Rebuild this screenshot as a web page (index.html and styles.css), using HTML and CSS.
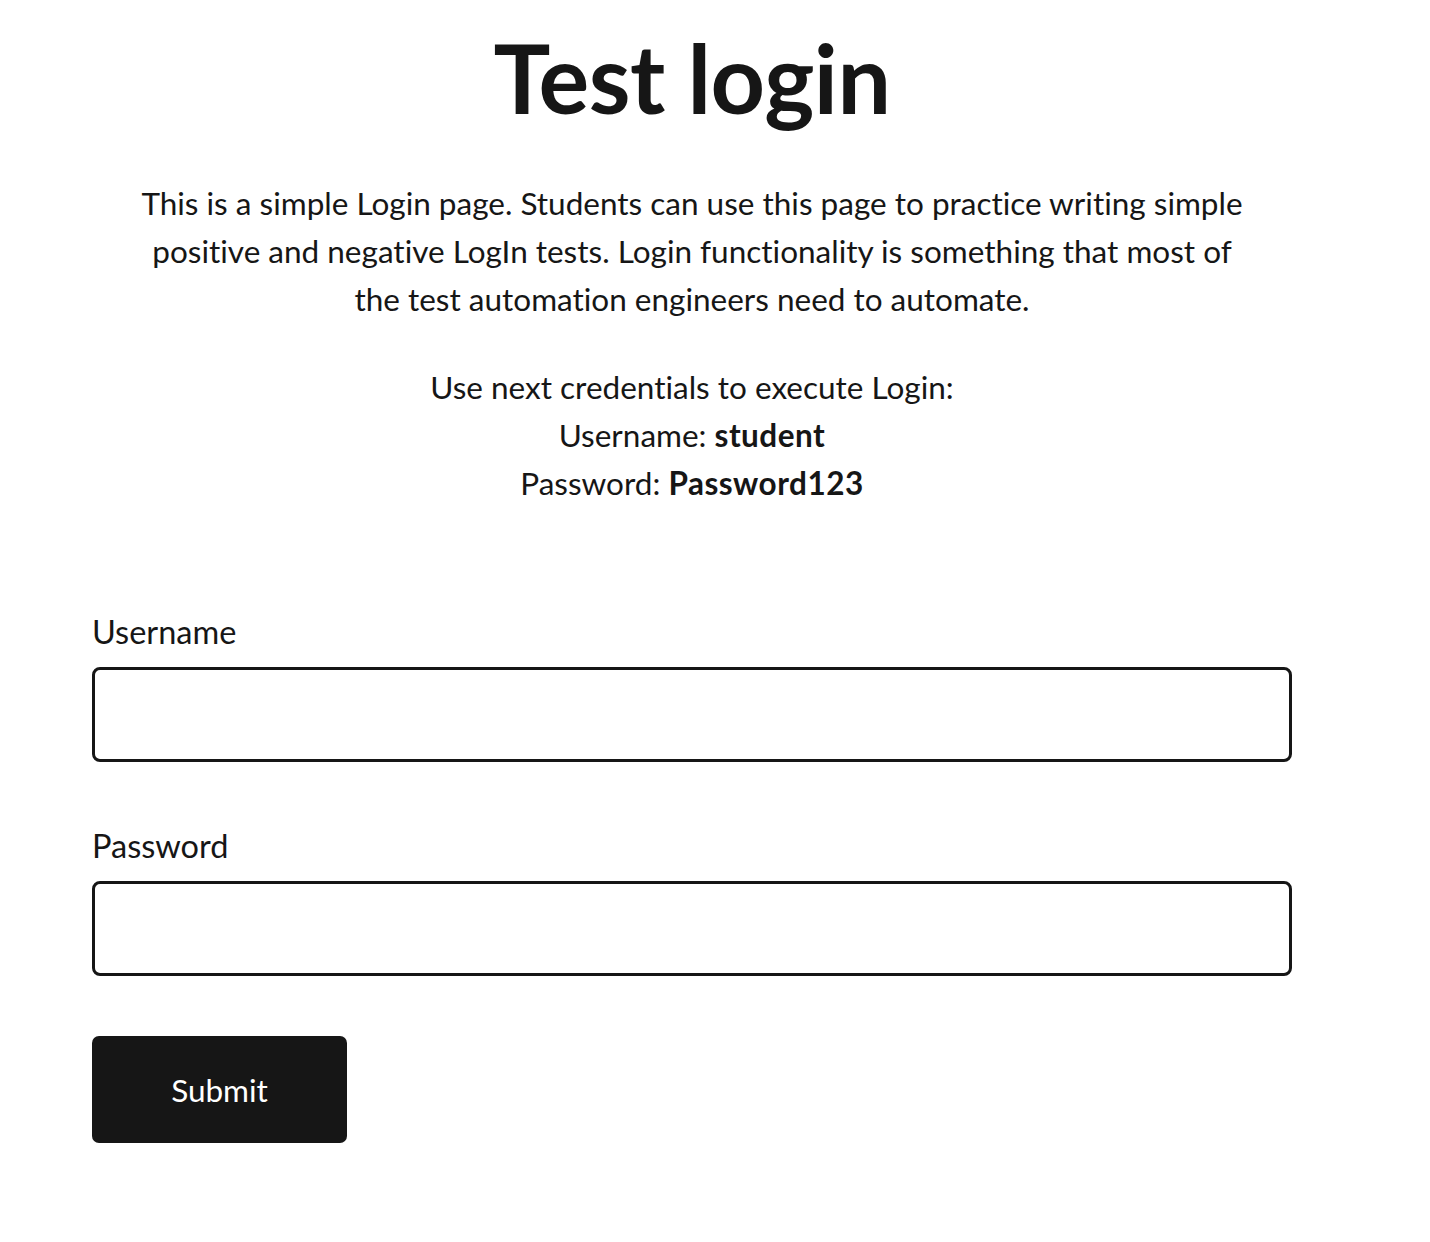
FILE: index.html
```html
<!DOCTYPE html>
<html lang="en">
<head>
<meta charset="utf-8">
<title>Test Login</title>
<link rel="stylesheet" href="styles.css">
</head>
<body>
<main class="page">
  <section class="login">
    <h2 class="title">Test login</h2>
    <p class="intro">This is a simple Login page. Students can use this page to practice writing simple positive and negative LogIn tests. Login functionality is something that most of the test automation engineers need to automate.</p>
    <p class="creds">Use next credentials to execute Login:<br>Username: <strong>student</strong><br>Password: <strong>Password123</strong></p>
    <form class="form">
      <div class="field">
        <label class="label" for="username">Username</label>
        <input class="input" type="text" id="username" name="username">
      </div>
      <div class="field">
        <label class="label" for="password">Password</label>
        <input class="input" type="password" id="password" name="password">
      </div>
      <button class="submit" type="button">Submit</button>
    </form>
  </section>
</main>
</body>
</html>
```
FILE: styles.css
```css
html, body {
  margin: 0;
  padding: 0;
  background: #fff;
}
body {
  font-family: Lato, "Liberation Sans", sans-serif;
  color: #161616;
  font-variant-ligatures: none;
}
.page {
  padding: 0 0 0 92px;
}
.login {
  width: 1200px;
}
.title {
  margin: 20px 0 0;
  font-size: 95px;
  font-weight: 700;
  line-height: 1.2;
  text-align: center;
  letter-spacing: -0.5px;
}
.intro {
  margin: 45px auto 0;
  width: 1110px;
  font-size: 31.5px;
  line-height: 48px;
  text-align: center;
}
.creds {
  margin: 40px 0 0;
  font-size: 31.5px;
  line-height: 48px;
  text-align: center;
}
.creds strong {
  font-weight: 700;
  letter-spacing: 0.5px;
}
.form {
  margin-top: 105px;
  display: flex;
  flex-direction: column;
  align-items: flex-start;
}
.field {
  width: 100%;
  display: flex;
  flex-direction: column;
}
.field + .field {
  margin-top: 64px;
}
.label {
  font-size: 32.5px;
  line-height: 40px;
  margin-bottom: 15px;
}
.input {
  box-sizing: border-box;
  width: 1200px;
  height: 95px;
  border: 3px solid #161616;
  border-radius: 8px;
  background: #fff;
  font-family: inherit;
  font-size: 30px;
  padding: 0 20px;
  outline: none;
}
.submit {
  margin-top: 60px;
  width: 255px;
  height: 107px;
  border: none;
  border-radius: 7px;
  background: #161616;
  color: #fff;
  font-family: inherit;
  font-size: 31.5px;
  cursor: pointer;
}
```
